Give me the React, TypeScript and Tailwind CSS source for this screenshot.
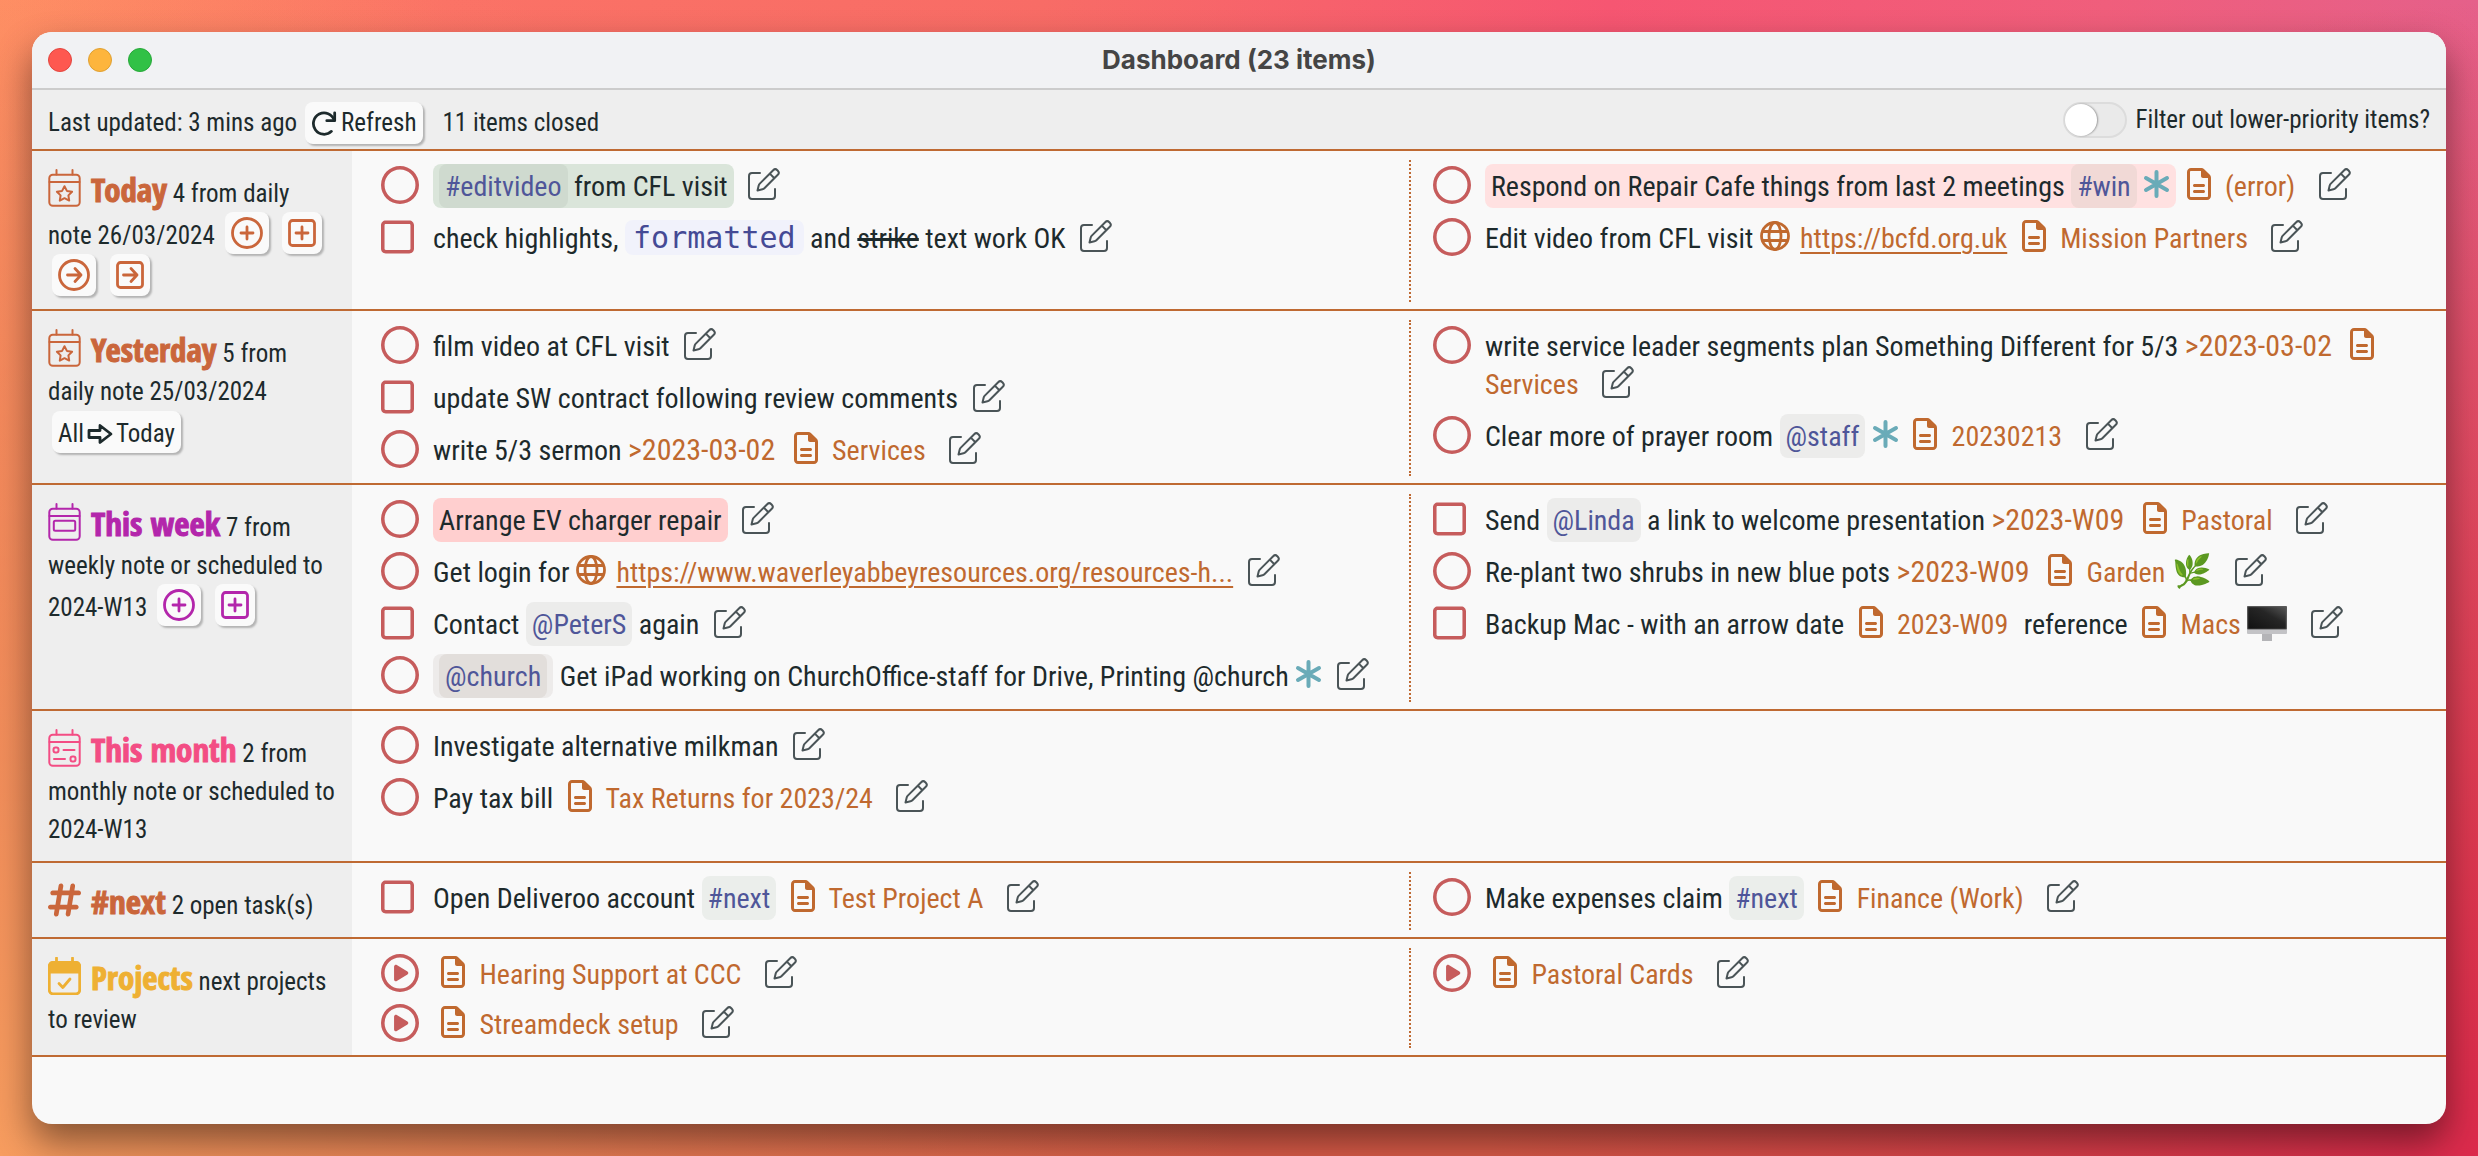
import type { ReactNode } from 'react';
import { FaHashtag, FaRegCircle, FaRegCirclePlay, FaRegFileLines, FaRegSquare } from 'react-icons/fa6';

/* ---------- Icons ---------- */

function EditIcon() {
  return (
    <svg viewBox="0 0 32 32" className="h-8 w-8" fill="none" stroke="currentColor" strokeWidth="2" strokeLinecap="round" strokeLinejoin="round" aria-hidden="true">
      <path d="M12 5H4a3 3 0 0 0-3 3v20a3 3 0 0 0 3 3h20a3 3 0 0 0 3-3v-7" />
      <path d="M25.2 2.2a2.9 2.9 0 0 1 4.1 0l.5.5a2.9 2.9 0 0 1 0 4.1L16.400 20.200a4 4 0 0 1-1.900 1.100L9.500 22.500l1.200-5a4 4 0 0 1 1.100-1.900zM21.800 5.600l4.600 4.600" />
    </svg>
  );
}

function GlobeIcon() {
  return (
    <svg viewBox="0 0 30 30" className="inline h-[30px] w-[30px] align-[-3px]" fill="none" stroke="currentColor" strokeWidth="2.800" aria-hidden="true">
      <circle cx="15" cy="15" r="13.500" />
      <ellipse cx="15" cy="15" rx="6" ry="13.500" />
      <path d="M2.500 10.500h25M2.500 19.500h25" />
    </svg>
  );
}

function Asterisk() {
  return (
    <svg viewBox="0 0 27 28" className="inline h-7 w-[27px] align-[-2px] text-[#6aabb8]" fill="none" stroke="currentColor" strokeWidth="4" strokeLinecap="round" aria-hidden="true">
      <path d="M13.500 2v24M3 8l21 12M24 8L3 20" />
    </svg>
  );
}

function RotateIcon() {
  return (
    <svg viewBox="0 0 28 28" className="h-[26px] w-[26px]" fill="none" stroke="currentColor" strokeWidth="3" strokeLinecap="round" strokeLinejoin="round" aria-hidden="true">
      <path d="M25.500 3v8.500H17" />
      <path d="M25 11A11.500 11.500 0 1 0 22 23" />
    </svg>
  );
}

function ArrowOutlineIcon() {
  return (
    <svg viewBox="0 0 26 22" className="mx-[3px] h-[22px] w-[26px]" fill="none" stroke="currentColor" strokeWidth="2.800" strokeLinejoin="round" aria-hidden="true">
      <path d="M2 7.500h11V2.500L24 11l-11 8.500v-5H2z" />
    </svg>
  );
}

function ActionIcon({ shape, glyph }: { shape: 'circle' | 'square'; glyph: 'plus' | 'arrow' }) {
  const c = shape === 'circle' ? 16 : 14;
  return (
    <svg
      viewBox={shape === 'circle' ? '0 0 32 32' : '0 0 28 32'}
      className={shape === 'circle' ? 'h-8 w-8' : 'h-8 w-7'}
      fill="none"
      stroke="currentColor"
      strokeWidth="2.800"
      strokeLinecap="round"
      strokeLinejoin="round"
      aria-hidden="true"
    >
      {shape === 'circle' ? <circle cx="16" cy="16" r="14.500" /> : <rect x="1.500" y="3.500" width="25" height="25" rx="3" />}
      {glyph === 'plus' ? (
        <path d={`M${c} 10v12M${c - 6} 16h12`} />
      ) : (
        <path d={`M${c - 6.500} 16h13.500M${c + 1} 9.500l6 6.500-6 6.500`} />
      )}
    </svg>
  );
}

type CalendarKind = 'star' | 'week' | 'month' | 'check';

function CalendarIcon({ kind }: { kind: CalendarKind }) {
  return (
    <svg viewBox="0 0 33 38" className="-mt-2 mr-[10px] inline h-[38px] w-[33px] align-[-5px]" fill="none" stroke="currentColor" strokeWidth={kind === 'check' ? 2.800 : 2} strokeLinecap="round" strokeLinejoin="round" aria-hidden="true">
      <path d="M8.500 1v4.500M24.500 1v4.500" />
      <rect x="1.300" y="5.800" width="30.400" height="31" rx="3.500" />
      {kind !== 'check' && <path d="M1.500 13h30" />}
      {kind === 'star' && <path d="M16.500 17.200l2.400 4.700 5.200.8-3.700 3.700.8 5.200-4.700-2.400-4.700 2.400.8-5.200-3.700-3.700 5.200-.8z" />}
      {kind === 'week' && <rect x="5.800" y="17.800" width="21.400" height="10" rx="1.500" />}
      {kind === 'month' && (
        <>
          <rect x="5.500" y="18.500" width="5" height="5" rx="2" />
          <path d="M15.500 21h11M6 30h11" />
          <rect x="22.500" y="27.500" width="5" height="5" rx="2" />
        </>
      )}
      {kind === 'check' && (
        <>
          <path d="M1.500 8.500a3 3 0 0 1 3-3h24a3 3 0 0 1 3 3V15h-30z" fill="currentColor" />
          <path d="M11 26.500l3.800 4 7.200-8.500" />
        </>
      )}
    </svg>
  );
}

function MonitorIcon() {
  return (
    <svg viewBox="0 0 40 36" className="inline h-9 w-10 align-[-8px]" role="img" aria-label="desktop computer">
      <defs>
        <linearGradient id="screen" x1="0" y1="1" x2="1" y2="0">
          <stop offset="0" stopColor="#111111" />
          <stop offset="0.6" stopColor="#262626" />
          <stop offset="1" stopColor="#555555" />
        </linearGradient>
      </defs>
      <path d="M15 28h10v7H15z" fill="#b4b4b7" />
      <rect x="0" y="0" width="40" height="28" rx="1" fill="#c3c3c6" />
      <rect x="0" y="0" width="40" height="23.500" rx="1" fill="#5a5a5a" />
      <rect x="1.200" y="1.200" width="37.600" height="21.500" fill="url(#screen)" />
    </svg>
  );
}

/* ---------- Inline pieces ---------- */

const PILL = 'rounded-lg px-1.5 pt-1.5 pb-[5px]';

function Tag({ children, tone = 'bg-[#ececeb]' }: { children: ReactNode; tone?: string }) {
  return <span className={`${PILL} ${tone} text-[#4f5699]`}>{children}</span>;
}

function Mark({ children, tone }: { children: ReactNode; tone: string }) {
  return <span className={`${PILL} ${tone}`}>{children}</span>;
}

function Note({ children, lead = true }: { children: ReactNode; lead?: boolean }) {
  return (
    <a href="#note" className="mr-[9px] text-[#c0692f]">
      <FaRegFileLines className={lead ? 'mr-2 ml-2 inline h-8 w-6 align-[-4px]' : 'mr-2 ml-1 inline h-8 w-6 align-[-4px]'} aria-hidden="true" />{' '}
      {children}
    </a>
  );
}

function Url({ children }: { children: string }) {
  return (
    <span className="text-[#c0692f]">
      <GlobeIcon />{' '}
      <a href="#link" className="ml-1 underline decoration-2 underline-offset-4">{children}</a>
    </span>
  );
}

function When({ children }: { children: string }) {
  return <span className="mr-1 text-[30px] leading-none text-[#c0692f]">{children}</span>;
}

/* ---------- Rows ---------- */

type Status = 'circle' | 'square' | 'play';
type Item = { status: Status; body: ReactNode };

function StatusButton({ status }: { status: Status }) {
  return (
    <button type="button" aria-label={status === 'play' ? 'Review project' : 'Complete item'} className="flex h-[38px] w-[52px] shrink-0 items-center text-[#c65c5c]">
      {status === 'circle' && <FaRegCircle className="h-[38px] w-[38px]" />}
      {status === 'square' && <FaRegSquare className="h-[38px] w-[33px]" />}
      {status === 'play' && <FaRegCirclePlay className="h-[38px] w-[38px]" />}
    </button>
  );
}

function Column({ items, dense }: { items: Item[]; dense?: boolean }) {
  return (
    <ul className={dense ? 'flex flex-col gap-[10px] pt-1.5 pb-1' : 'flex flex-col gap-3 pt-1.5 pb-1.5'}>
      {items.map((item, i) => (
        <li key={i} className="flex items-start">
          <StatusButton status={item.status} />
          <div className="min-w-0 pt-0.5 text-[28px] leading-[38px]">
            {item.body}{' '}
            <button type="button" aria-label="Edit item" className="mx-2 inline-block h-8 align-[-4px] text-[#4a5457]">
              <EditIcon />
            </button>
          </div>
        </li>
      ))}
    </ul>
  );
}

type SectionProps = { icon: ReactNode; color: string; title: string; description: string; actions?: ReactNode; left: Item[]; right?: Item[]; dense?: boolean };

function Section({ icon, color, title, description, actions, left, right, dense }: SectionProps) {
  return (
    <section className="flex border-b-2 border-[#bf6a33]">
      <header className="w-80 shrink-0 bg-[#eeeeee] px-4 pt-[22px] pb-3 text-[25px] leading-[38px]">
        <span className={color}>
          {icon}
          <h2 className="inline font-['Open_Sans_Condensed'] text-[33px] leading-none font-extrabold [-webkit-text-stroke:1px_currentColor]">{title}</h2>
        </span>{' '}
        {description} <span className={color}>{actions}</span>
      </header>
      <div className="grid flex-1 grid-cols-2 pt-[9px] pr-1 pb-[7px] pl-6">
        <div className="pl-[5px]">
          <Column items={left} dense={dense} />
        </div>
        {right && (
          <div className="border-l-2 border-dotted border-[#bf6a33] pl-[22px]">
            <Column items={right} dense={dense} />
          </div>
        )}
      </div>
    </section>
  );
}

const CARD = 'rounded-lg bg-[#fafafa] shadow-[2px_2px_2px_rgba(0,0,0,0.25)]';

function Action({ shape, glyph, label }: { shape: 'circle' | 'square'; glyph: 'plus' | 'arrow'; label: string }) {
  return (
    <button type="button" aria-label={label} className={`${CARD} mx-1 -my-px inline-flex h-[42px] items-center px-1.5 align-[-5px]`}>
      <ActionIcon shape={shape} glyph={glyph} />
    </button>
  );
}

/* ---------- Page ---------- */

export default function App() {
  return (
    <div className="flex min-h-screen bg-[radial-gradient(ellipse_50%_110%_at_0%_100%,#f79d5f,transparent),radial-gradient(ellipse_40%_100%_at_100%_100%,#dc2a4c,transparent),linear-gradient(to_bottom,transparent,#dc5c48),linear-gradient(to_right,#ff8d64,#fb7266_18%,#f86c66_42%,#f65672_65%,#f05e7c_85%,#e5608a)] p-8 font-['Roboto_Condensed',sans-serif] text-[#1d2a2c]">
      <main className="flex flex-1 flex-col overflow-hidden rounded-[20px] bg-[#f9f9f9] shadow-[0_18px_36px_rgba(0,0,0,0.45)]">
        <div className="flex h-[58px] items-center border-b-2 border-[#cccccc] bg-[#f1f2f4] px-4">
          <div className="flex flex-1 gap-4">
            <button type="button" aria-label="Close" className="h-6 w-6 rounded-full border border-[#e2463f] bg-[#fe5850]" />
            <button type="button" aria-label="Minimise" className="h-6 w-6 rounded-full border border-[#dfa032] bg-[#fdb53d]" />
            <button type="button" aria-label="Zoom" className="h-6 w-6 rounded-full border border-[#27a839] bg-[#31c146]" />
          </div>
          <h1 className="font-['Inter'] text-[26px] leading-8 font-bold text-[#454545]">Dashboard (23 items)</h1>
          <div className="flex-1" />
        </div>

        <div className="flex h-[61px] items-center justify-between border-b-2 border-[#bf6a33] bg-[#eeeeee] px-4 text-[25px] leading-[38px]">
          <div className="flex items-center pt-1.5">
            <span>Last updated: 3 mins ago</span>
            <button type="button" className={`${CARD} ml-2 flex h-[42px] items-center gap-1 px-1.5`}>
              <RotateIcon />
              Refresh
            </button>
            <span className="ml-5">11 items closed</span>
          </div>
          <label className="flex items-center gap-2">
            <input
              type="checkbox"
              role="switch"
              className="h-9 w-16 appearance-none rounded-full border-2 border-[#dcdcdc] bg-[#eaeaea] before:block before:h-8 before:w-8 before:rounded-full before:bg-white before:shadow-[1px_0_2px_rgba(0,0,0,0.35)]"
            />
            Filter out lower-priority items?
          </label>
        </div>

        <Section
          icon={<CalendarIcon kind="star" />}
          color="text-[#ca663b]"
          title="Today"
          description="4 from daily note 26/03/2024"
          actions={
            <>
              <Action shape="circle" glyph="plus" label="Add task" />{' '}
              <Action shape="square" glyph="plus" label="Add checklist" />{' '}
              <Action shape="circle" glyph="arrow" label="Add task to tomorrow" />{' '}
              <Action shape="square" glyph="arrow" label="Add checklist to tomorrow" />
            </>
          }
          left={[
            { status: 'circle', body: <Mark tone="bg-[#dae5da]"><Tag tone="bg-[#cfdacf]">#editvideo</Tag> from CFL visit</Mark> },
            {
              status: 'square',
              body: (
                <>
                  check highlights,{' '}
                  <code className="rounded-lg bg-[#f1f2fb] px-2 font-['DejaVu_Sans_Mono'] text-[30px] leading-none text-[#454a95]">formatted</code>{' '}
                  and <s className="decoration-[3px]">strike</s> text work OK
                </>
              ),
            },
          ]}
          right={[
            {
              status: 'circle',
              body: (
                <>
                  <Mark tone="bg-[#ffe1e1]">Respond on Repair Cafe things from last 2 meetings <Tag tone="bg-[#f1d9d6]">#win</Tag> <Asterisk /></Mark>{' '}
                  <Note lead={false}>(error)</Note>
                </>
              ),
            },
            { status: 'circle', body: <>Edit video from CFL visit <Url>https://bcfd.org.uk</Url> <Note>Mission Partners</Note></> },
          ]}
        />

        <Section
          icon={<CalendarIcon kind="star" />}
          color="text-[#ca663b]"
          title="Yesterday"
          description="5 from daily note 25/03/2024"
          actions={
            <button type="button" className={`${CARD} mx-1 inline-flex h-[42px] items-center px-1.5 pt-1 text-[#1d2a2c]`}>
              All
              <ArrowOutlineIcon />
              Today
            </button>
          }
          left={[
            { status: 'circle', body: 'film video at CFL visit' },
            { status: 'square', body: 'update SW contract following review comments' },
            { status: 'circle', body: <>write 5/3 sermon <When>&gt;2023-03-02</When> <Note>Services</Note></> },
          ]}
          right={[
            { status: 'circle', body: <>write service leader segments plan Something Different for 5/3 <When>&gt;2023-03-02</When> <Note>Services</Note></> },
            { status: 'circle', body: <>Clear more of prayer room <Tag>@staff</Tag> <Asterisk /> <Note>20230213</Note></> },
          ]}
        />

        <Section
          icon={<CalendarIcon kind="week" />}
          color="text-[#b326ab]"
          title="This week"
          description="7 from weekly note or scheduled to 2024-W13"
          actions={
            <>
              <Action shape="circle" glyph="plus" label="Add task" />{' '}
              <Action shape="square" glyph="plus" label="Add checklist" />
            </>
          }
          left={[
            { status: 'circle', body: <Mark tone="bg-[#ffcfcf]">Arrange EV charger repair</Mark> },
            { status: 'circle', body: <>Get login for <Url>https://www.waverleyabbeyresources.org/resources-h...</Url></> },
            { status: 'square', body: <>Contact <Tag>@PeterS</Tag> again</> },
            {
              status: 'circle',
              body: (
                <>
                  <Mark tone="bg-[#edebea]"><Tag tone="bg-[#e2dedb]">@church</Tag></Mark> Get iPad working on ChurchOffice-staff for Drive, Printing @church <Asterisk />
                </>
              ),
            },
          ]}
          right={[
            { status: 'square', body: <>Send <Tag>@Linda</Tag> a link to welcome presentation <When>&gt;2023-W09</When> <Note>Pastoral</Note></> },
            { status: 'circle', body: <>Re-plant two shrubs in new blue pots <When>&gt;2023-W09</When> <Note>Garden <span className="text-[32px] leading-none">🌿</span></Note></> },
            {
              status: 'square',
              body: (
                <>
                  Backup Mac - with an arrow date <Note>2023-W09</Note> reference <Note>Macs <MonitorIcon /></Note>
                </>
              ),
            },
          ]}
        />

        <Section
          icon={<CalendarIcon kind="month" />}
          color="text-[#f34d84]"
          title="This month"
          description="2 from monthly note or scheduled to 2024-W13"
          left={[
            { status: 'circle', body: 'Investigate alternative milkman' },
            { status: 'circle', body: <>Pay tax bill <Note>Tax Returns for 2023/24</Note></> },
          ]}
        />

        <Section
          icon={<FaHashtag className="-mt-2 mr-[10px] inline h-[38px] w-[33px] align-[-5px]" aria-hidden="true" />}
          color="text-[#ca663b]"
          title="#next"
          description="2 open task(s)"
          left={[{ status: 'square', body: <>Open Deliveroo account <Tag tone="bg-[#ebeeeb]">#next</Tag> <Note>Test Project A</Note></> }]}
          right={[{ status: 'circle', body: <>Make expenses claim <Tag tone="bg-[#ebeeeb]">#next</Tag> <Note>Finance (Work)</Note></> }]}
        />

        <Section
          icon={<CalendarIcon kind="check" />}
          color="text-[#eeb033]"
          title="Projects"
          description="next projects to review"
          dense
          left={[
            { status: 'play', body: <Note>Hearing Support at CCC</Note> },
            { status: 'play', body: <Note>Streamdeck setup</Note> },
          ]}
          right={[{ status: 'play', body: <Note>Pastoral Cards</Note> }]}
        />
      </main>
    </div>
  );
}
